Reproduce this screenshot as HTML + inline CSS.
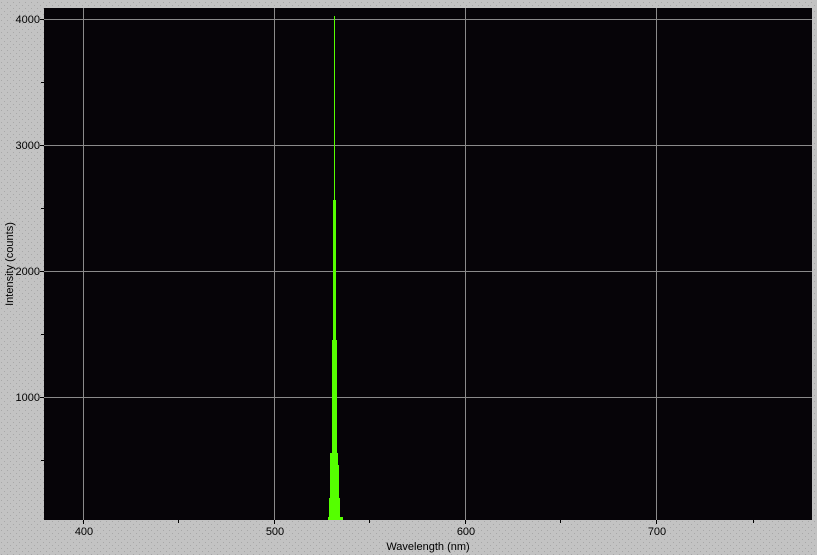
<!DOCTYPE html>
<html><head><style>
html,body{margin:0;padding:0;background:#c3c3c3;}
svg{display:block}
text{font-family:"Liberation Sans",sans-serif;font-size:11px;fill:#000}
</style></head><body>
<svg width="817" height="555" xmlns="http://www.w3.org/2000/svg">
<defs><pattern id="d" width="6" height="6" patternUnits="userSpaceOnUse"><rect width="6" height="6" fill="#c3c3c3"/><rect x="1" y="2" width="1" height="1" fill="#a8a8a8"/><rect x="4" y="5" width="1" height="1" fill="#a8a8a8"/></pattern></defs>
<rect width="817" height="555" fill="url(#d)"/>
<rect x="44" y="8" width="768" height="512" fill="#060408"/>
<g stroke="#8a8a8a" stroke-width="1">
<line x1="83.5" y1="8" x2="83.5" y2="520"/>
<line x1="274.5" y1="8" x2="274.5" y2="520"/>
<line x1="465.5" y1="8" x2="465.5" y2="520"/>
<line x1="656.5" y1="8" x2="656.5" y2="520"/>
<line x1="44" y1="19.5" x2="812" y2="19.5"/>
<line x1="44" y1="145.5" x2="812" y2="145.5"/>
<line x1="44" y1="271.5" x2="812" y2="271.5"/>
<line x1="44" y1="397.5" x2="812" y2="397.5"/>
</g>
<g stroke="#000" stroke-width="1">
<line x1="40" y1="19.5" x2="44" y2="19.5"/><line x1="40" y1="145.5" x2="44" y2="145.5"/>
<line x1="40" y1="271.5" x2="44" y2="271.5"/><line x1="40" y1="397.5" x2="44" y2="397.5"/>
<line x1="41" y1="82.5" x2="44" y2="82.5"/><line x1="41" y1="208.5" x2="44" y2="208.5"/>
<line x1="41" y1="334.5" x2="44" y2="334.5"/><line x1="41" y1="460.5" x2="44" y2="460.5"/>
<line x1="83.5" y1="520" x2="83.5" y2="524"/><line x1="274.5" y1="520" x2="274.5" y2="524"/>
<line x1="465.5" y1="520" x2="465.5" y2="524"/><line x1="656.5" y1="520" x2="656.5" y2="524"/>
<line x1="178.5" y1="520" x2="178.5" y2="523"/><line x1="369.5" y1="520" x2="369.5" y2="523"/>
<line x1="560.5" y1="520" x2="560.5" y2="523"/><line x1="753.5" y1="520" x2="753.5" y2="523"/>
</g>
<g fill="#55ff00">
<rect x="334" y="16" width="1" height="504"/>
<rect x="333" y="200" width="3" height="320"/>
<rect x="332" y="340" width="5" height="180"/>
<rect x="330" y="453" width="8" height="67"/>
<rect x="337" y="465" width="2" height="55"/>
<rect x="329" y="498" width="11" height="22"/>
<rect x="328" y="517" width="15" height="3"/>
</g>
<g text-anchor="end">
<text x="40" y="23">4000</text><text x="40" y="149">3000</text>
<text x="40" y="275">2000</text><text x="40" y="401">1000</text>
</g>
<g text-anchor="middle">
<text x="84" y="535">400</text><text x="275" y="535">500</text>
<text x="466" y="535">600</text><text x="657" y="535">700</text>
<text x="428" y="550">Wavelength (nm)</text>
</g>
<text transform="translate(13,264) rotate(-90)" text-anchor="middle">Intensity (counts)</text>
</svg>
</body></html>
